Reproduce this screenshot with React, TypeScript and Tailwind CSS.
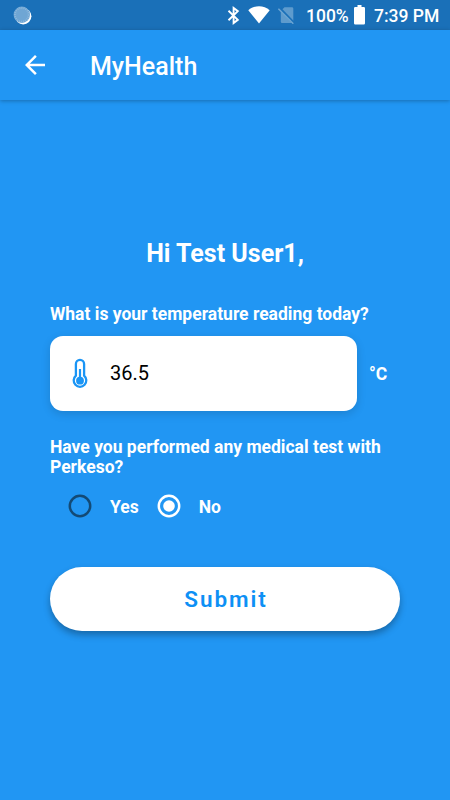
import { useState } from 'react'

function StatusBar() {
  return (
    <div className="flex h-[30px] items-center bg-[#1a70b8] pr-[10px] pl-[13px] text-white">
      <svg className="h-[19px] w-[19px]" viewBox="0 0 19 19">
        <circle cx="10.2" cy="10.2" r="8.200" fill="#fff" />
        <circle cx="8.8" cy="8.8" r="8.200" fill="#6fa6d4" />
        <circle cx="8.8" cy="8.8" r="6.800" fill="none" stroke="#8fb9dd" strokeWidth="1.800" strokeDasharray="0.9 1.2" />
      </svg>
      <div className="flex-1" />
      <svg className="h-[19px] w-[13px]" viewBox="0 0 13 19" fill="none" stroke="currentColor" strokeWidth="1.9">
        <path d="M1.500 4.800 10.800 13.800 6.600 17V2L10.800 5.200 1.500 14.200" />
      </svg>
      <svg className="ml-[8px] h-[18px] w-[22px]" viewBox="0 0 22 18" fill="currentColor">
        <path d="M11 17.500.3 4.200C3.200 1.600 7 .3 11 .3s7.800 1.300 10.700 3.900Z" />
      </svg>
      <svg className="ml-[7px] h-[18px] w-[18px]" viewBox="0 0 18 18">
        <path d="M7.500 1.200H15q1.300 0 1.300 1.300v13.200L4.700 3.900ZM3.800 5.600 14.800 17H5.100q-1.300 0-1.300-1.300Z" fill="#5e9bcd" />
        <path d="m2.800 1.500 14.500 14.900" stroke="#1a70b8" strokeWidth="1.300" />
        <path d="m1.400 2.700 14.900 15" stroke="#6ea6d3" strokeWidth="1.500" />
      </svg>
      <span className="mt-[3px] ml-[11px] w-[43px] text-[17.5px] leading-none font-medium whitespace-nowrap">100%</span>
      <svg className="ml-[5px] h-5 w-[11px]" viewBox="0 0 11 20" fill="currentColor">
        <path d="M3.500 0h4v2h2.300q1.200 0 1.200 1.200v15.100q0 1.200-1.200 1.200H1.200Q0 19.500 0 18.300V3.200Q0 2 1.200 2h2.300Z" />
      </svg>
      <span className="mt-[3px] ml-[9px] w-[66px] text-[17.5px] leading-none font-medium whitespace-nowrap">7:39 PM</span>
    </div>
  )
}

function AppBar() {
  return (
    <header className="flex h-[70px] items-center bg-[#2196f3] pl-[25px] text-white shadow-[0_1px_4px_rgba(0,0,0,0.28)]">
      <button type="button" aria-label="Back">
        <svg className="h-5 w-5" viewBox="4 4 16 16" fill="currentColor">
          <path d="M20 11H7.830l5.590-5.590L12 4l-8 8 8 8 1.410-1.410L7.830 13H20v-2z" />
        </svg>
      </button>
      <h1 className="ml-[45px] pt-[2px] text-[25px] leading-none font-medium">MyHealth</h1>
    </header>
  )
}

function ThermometerIcon() {
  return (
    <svg className="h-8 w-4" viewBox="0 0 16 32" fill="none" stroke="#1a95f5">
      <path d="M3.900 17.700V5.900a4.100 4.100 0 0 1 8.200 0v11.800a6.300 6.300 0 1 1-8.200 0Z" strokeWidth="2.300" />
      <path d="M8 11v11" strokeWidth="2.200" />
      <circle cx="8" cy="22.700" r="3.900" fill="#1a95f5" stroke="none" />
    </svg>
  )
}

type RadioProps = {
  label: string
  checked: boolean
  onSelect: () => void
}

function Radio({ label, checked, onSelect }: RadioProps) {
  return (
    <button type="button" role="radio" aria-checked={checked} onClick={onSelect} className="flex items-center">
      <svg
        className={checked ? 'h-6 w-6 text-white' : 'h-6 w-6 text-[#134a75]'}
        viewBox="0 0 24 24"
        fill="none"
        stroke="currentColor"
      >
        <circle cx="12" cy="12" r="10.200" strokeWidth="2.500" />
        {checked && <circle cx="12" cy="12" r="5.800" fill="currentColor" stroke="none" />}
      </svg>
      <span className="ml-[18px] pt-px text-[17.5px] leading-5 font-bold">{label}</span>
    </button>
  )
}

export default function App() {
  const [temperature, setTemperature] = useState('36.5')
  const [tested, setTested] = useState(false)

  return (
    <div className="flex h-[800px] w-[450px] flex-col overflow-hidden bg-[#2196f3] font-[Roboto,sans-serif] text-white">
      <StatusBar />
      <AppBar />
      <main className="flex flex-col px-[50px] pt-[139px]">
        <h2 className="text-center text-[25px] leading-[30px] font-bold">Hi Test User1,</h2>

        <label htmlFor="temperature" className="mt-[35px] text-[17.5px] leading-5 font-bold">
          What is your temperature reading today?
        </label>
        <div className="mt-3 flex items-center">
          <div className="flex h-[75px] w-[307px] items-center rounded-[13px] bg-white pl-[22px] shadow-[0_3px_10px_rgba(0,0,0,0.14)]">
            <ThermometerIcon />
            <input
              id="temperature"
              className="mb-px ml-[22px] w-[200px] bg-transparent text-[20px] leading-6 text-black outline-none"
              value={temperature}
              onChange={(e) => setTemperature(e.target.value)}
            />
          </div>
          <span className="ml-3 text-[17.5px] leading-5 font-bold">°C</span>
        </div>

        <p className="mt-[26px] text-[17.5px] leading-5 font-bold">
          Have you performed any medical test with Perkeso?
        </p>
        <div role="radiogroup" className="mt-[17px] flex gap-[18px] pl-[18px]">
          <Radio label="Yes" checked={tested} onSelect={() => setTested(true)} />
          <Radio label="No" checked={!tested} onSelect={() => setTested(false)} />
        </div>

        <button
          type="button"
          className="mt-[49px] h-16 rounded-full bg-white pt-[2px] pl-[2px] text-[22.5px] font-semibold tracking-[1.9px] text-[#0d90f5] shadow-[0_4px_7px_rgba(0,0,0,0.3)]"
        >
          Submit
        </button>
      </main>
    </div>
  )
}
